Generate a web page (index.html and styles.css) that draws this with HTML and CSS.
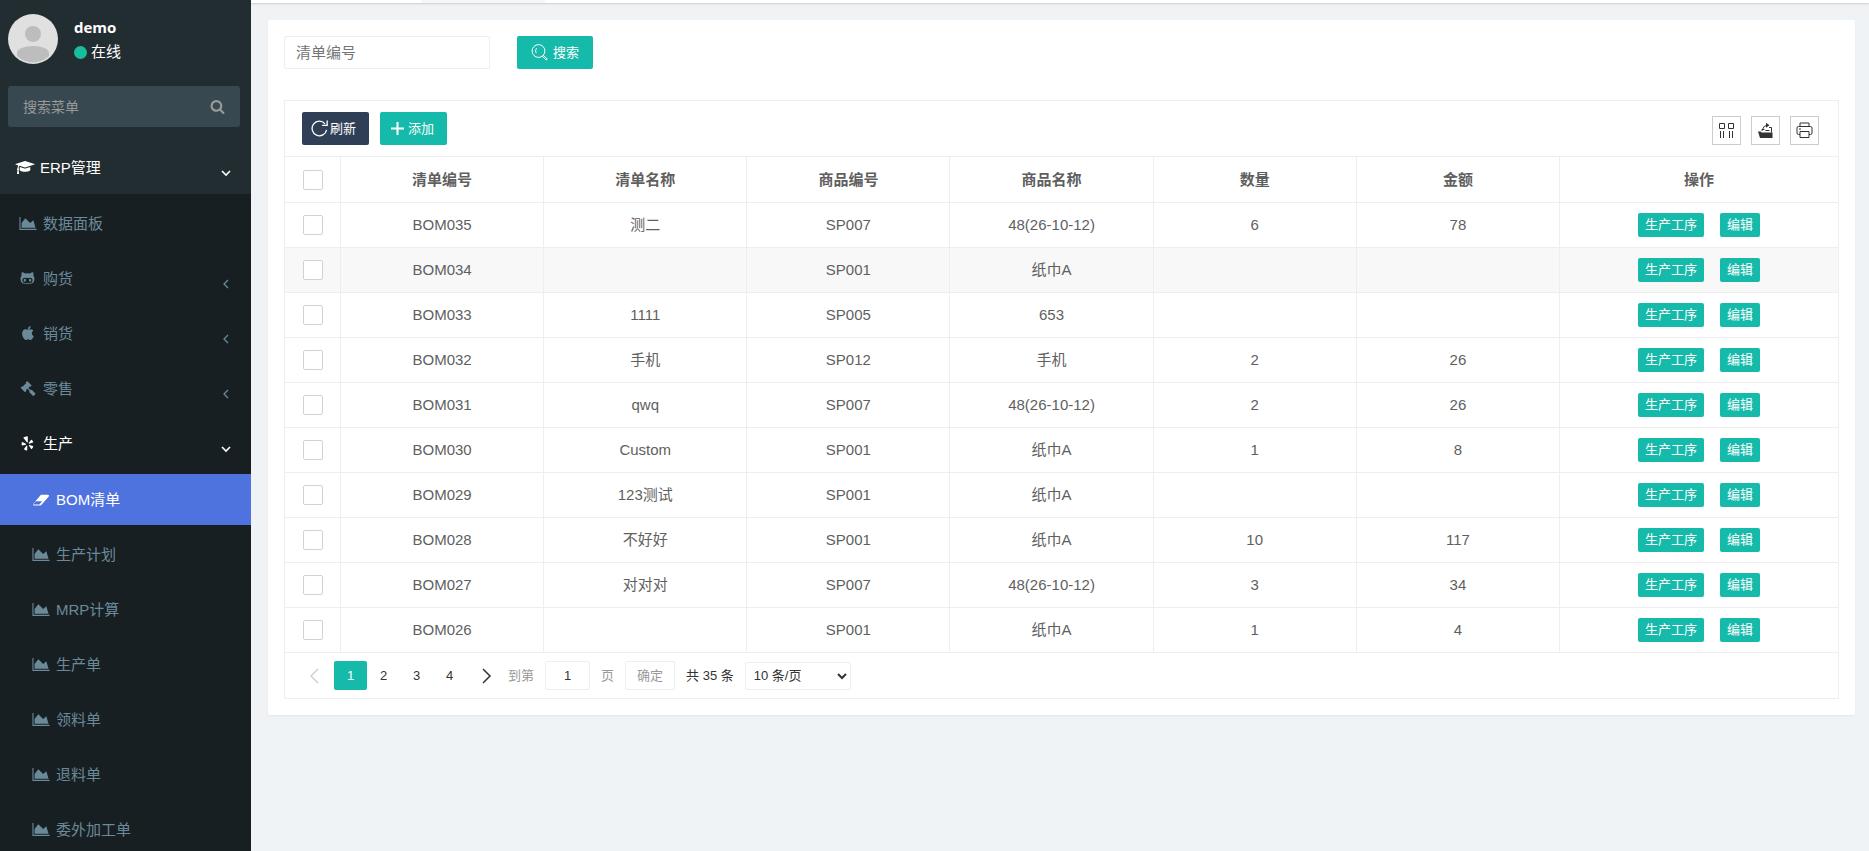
FILE: index.html
```html
<!DOCTYPE html>
<html lang="zh-CN">
<head>
    <meta charset="UTF-8">
    <meta name="viewport" content="width=device-width, initial-scale=1.0">
    <title>BOM清单</title>

    <link rel="stylesheet" href="styles.css">
</head>
<body>
    <svg class="sprite" aria-hidden="true">
        <symbol id="i-chart" viewBox="0 0 2048 1792"><path d="M2048 1536v128h-2048v-1536h128v1408h1920zM1664 512l256 896h-1664v-576l448-576 576 576z"/></symbol>
        <symbol id="i-cap" viewBox="0 0 2304 1792"><path d="M1774 836l18 316q4 69-82 128t-235 93.500-323 34.500-323-34.500-235-93.500-82-128l18-316 574 181q22 7 48 7t48-7zm530-324q0 23-22 31l-1120 352q-4 1-10 1t-10-1l-652-206q-43 34-71 111.500t-34 178.500q63 36 63 109 0 69-58 107l58 433q2 14-8 25-9 11-24 11h-192q-15 0-24-11-10-11-8-25l58-433q-58-38-58-107 0-73 65-111 11-207 98-330l-333-104q-22-8-22-31t22-31l1120-352q4-1 10-1t10 1l1120 352q22 8 22 31z"/></symbol>
        <symbol id="i-cat" viewBox="0 0 1792 1792"><path d="M640 1104q0 40-12.500 82t-43 76-72.500 34-72.500-34-43-76-12.500-82 12.500-82 43-76 72.500-34 72.500 34 43 76 12.500 82zm640 0q0 40-12.500 82t-43 76-72.500 34-72.500-34-43-76-12.500-82 12.500-82 43-76 72.500-34 72.500 34 43 76 12.500 82zm160 0q0-120-69-204t-187-84q-41 0-195 21-71 11-157 11t-157-11q-152-21-195-21-118 0-187 84t-69 204q0 88 32 153.500t81 103 122 60 140 29.500 149 7h168q82 0 149-7t140-29.500 122-60 81-103 32-153.500zm224-176q0 207-61 331-38 77-105.500 133t-141 86-170 47.500-171.500 22-167 4.500q-78 0-142-3t-147.500-12.500-152.500-30-137-51.500-121-81-86-115q-62-123-62-331 0-237 136-396-27-82-27-170 0-116 51-218 108 0 190 39.500t189 123.500q147-35 309-35 148 0 280 32 105-82 187-121t189-39q51 102 51 218 0 87-27 168 136 160 136 398z"/></symbol>
        <symbol id="i-apple" viewBox="0 0 1792 1792"><path d="M1585 1215q-39 125-123 250-129 196-257 196-49 0-140-32-86-32-151-32-61 0-142 33-81 34-132 34-152 0-301-259-147-261-147-503 0-228 113-374 113-144 284-144 72 0 177 30 104 30 138 30 45 0 143-34 102-34 173-34 119 0 213 65 52 36 104 100-79 67-114 118-65 94-65 207 0 124 69 223t158 126zm-376-1173q0 61-29 136-30 75-93 138-54 54-108 72-37 11-104 17 3-149 78-257 74-107 250-148 1 3 2.500 11t2.500 11q0 4 .5 10t.5 10z"/></symbol>
        <symbol id="i-gavel" viewBox="0 0 1792 1792"><path d="M1771 1536q0 53-37 90l-107 108q-39 37-91 37-53 0-90-37l-363-364q-38-36-38-90 0-53 43-96l-256-256-126 126q-14 14-34 14t-34-14q2 2 12.500 12t12.500 13 10 11.500 10 13.500 6 13.500 5.500 16.500 1.500 18q0 38-28 68-3 3-16.500 18t-19 20.500-18.500 16.500-22 15.500-22 9-26 4.500q-40 0-68-28l-408-408q-28-28-28-68 0-13 4.500-26t9-22 15.500-22 16.500-18.500 20.500-19 18-16.500q30-28 68-28 10 0 18 1.500t16.500 5.500 13.500 6 13.500 10 11.500 10 13 12.500 12 12.500q-14-14-14-34t14-34l348-348q14-14 34-14t34 14q-2-2-12.500-12t-12.500-13-10-11.500-10-13.500-6-13.500-5.500-16.500-1.500-18q0-38 28-68 3-3 16.500-18t19-20.500 18.500-16.500 22-15.500 22-9 26-4.500q40 0 68 28l408 408q28 28 28 68 0 13-4.500 26t-9 22-15.500 22-16.500 18.500-20.500 19-18 16.500q-30 28-68 28-10 0-18-1.500t-16.500-5.500-13.500-6-13.500-10-11.500-10-13-12.500-12-12.500q14 14 14 34t-14 34l-126 126 256 256q43-43 96-43 52 0 91 37l363 363q37 39 37 91z"/></symbol>
        <symbol id="i-yelp" viewBox="0 0 16 16"><path d="M3.500 1.200L7 .2q.8-.1.8.7v5.500q-.2 1-1 .3L3.200 2.200q-.3-.7.3-1zM2 6.500l3.700 1.700q.7.600-.1 1L2 10.200q-.8 0-.8-.8l.1-2.300q.1-.7.700-.6zM6.300 10.400q.9-.5.9.4v3.900q-.1.900-.9.700l-2-.8q-.8-.4-.4-1zM8.900 10.200q-.2-.9.700-.7l3.500 1.200q.8.400.4 1.100l-1.200 1.800q-.6.500-1.100 0zM9.300 8.200q-.9-.1-.4-.9l2.200-3.100q.6-.6 1.100 0l1.300 1.700q.4.800-.4 1.100z"/></symbol>
        <symbol id="i-eraser" viewBox="0 0 2048 1792"><path d="M832 1480l336-384h-768l-336 384h768zm1141-1077q15 34 9.500 71.500t-30.500 65.500l-896 1024q-38 44-96 44h-768q-38 0-69.500-20.500t-47.500-54.500q-15-34-9.500-71.500t30.500-65.500l896-1024q38-44 96-44h768q38 0 69.500 20.500t47.500 54.500z" fill-rule="evenodd"/></symbol>
        <symbol id="i-find" viewBox="0 0 1792 1792"><path d="M1216 832q0-185-131.500-316.500t-316.500-131.500-316.500 131.500-131.500 316.500 131.500 316.500 316.500 131.500 316.500-131.500 131.500-316.500zm512 832q0 52-38 90t-90 38q-54 0-90-38l-343-342q-179 124-399 124-143 0-273.500-55.500t-225-150-150-225-55.500-273.500 55.500-273.500 150-225 225-150 273.500-55.500 273.500 55.500 225 150 150 225 55.500 273.500q0 220-124 399l343 343q37 37 37 90z"/></symbol>
        <symbol id="i-left" viewBox="0 0 10 10"><path d="M7 1L3 5l4 4" fill="none" stroke="currentColor" stroke-width="1.300"/></symbol>
        <symbol id="i-down" viewBox="0 0 10 10"><path d="M1 3l4 4 4-4" fill="none" stroke="currentColor" stroke-width="1.600"/></symbol>
    </svg>

    <div class="wrapper">
        <aside class="sidebar">
            <div class="user">
                <svg class="avatar" viewBox="0 0 50 50">
                    <circle cx="25" cy="25" r="25" fill="#e0e0e0"/>
                    <circle cx="25" cy="20" r="8" fill="#bdbdbd"/>
                    <path d="M9 42v-3c0-4 7-7 16-7s16 3 16 7v3a23 23 0 0 1-32 0z" fill="#bdbdbd"/>
                </svg>
                <div class="user-info">
                    <div class="user-name">demo</div>
                    <div class="user-status"><span class="dot"></span>在线</div>
                </div>
            </div>
            <form class="menu-search">
                <input type="text" placeholder="搜索菜单" aria-label="搜索菜单">
                <button type="button" aria-label="搜索"><svg><use href="#i-find"/></svg></button>
            </form>
            <nav>
                <a class="menu-root" href="#"><svg class="menu-icon"><use href="#i-cap"/></svg>ERP管理<svg class="arrow"><use href="#i-down"/></svg></a>
                <ul class="menu">
                    <li><a href="#"><svg class="menu-icon"><use href="#i-chart"/></svg>数据面板</a></li>
                    <li><a href="#"><svg class="menu-icon"><use href="#i-cat"/></svg>购货<svg class="arrow"><use href="#i-left"/></svg></a></li>
                    <li><a href="#"><svg class="menu-icon"><use href="#i-apple"/></svg>销货<svg class="arrow"><use href="#i-left"/></svg></a></li>
                    <li><a href="#"><svg class="menu-icon"><use href="#i-gavel"/></svg>零售<svg class="arrow"><use href="#i-left"/></svg></a></li>
                    <li>
                        <a class="open" href="#"><svg class="menu-icon"><use href="#i-yelp"/></svg>生产<svg class="arrow"><use href="#i-down"/></svg></a>
                        <ul class="submenu">
                            <li><a class="active" href="#"><svg class="menu-icon"><use href="#i-eraser"/></svg>BOM清单</a></li>
                            <li><a href="#"><svg class="menu-icon"><use href="#i-chart"/></svg>生产计划</a></li>
                            <li><a href="#"><svg class="menu-icon"><use href="#i-chart"/></svg>MRP计算</a></li>
                            <li><a href="#"><svg class="menu-icon"><use href="#i-chart"/></svg>生产单</a></li>
                            <li><a href="#"><svg class="menu-icon"><use href="#i-chart"/></svg>领料单</a></li>
                            <li><a href="#"><svg class="menu-icon"><use href="#i-chart"/></svg>退料单</a></li>
                            <li><a href="#"><svg class="menu-icon"><use href="#i-chart"/></svg>委外加工单</a></li>
                        </ul>
                    </li>
                </ul>
            </nav>
        </aside>

        <main class="content">
            <div class="tabs"><div class="tab"></div></div>
            <section class="card">
                <form class="search-form">
                    <input class="search-input" type="text" placeholder="清单编号" aria-label="清单编号">
                    <button class="btn btn-search" type="button">
                        <svg viewBox="0 0 17 17" fill="none" stroke="currentColor"><circle cx="7.500" cy="7" r="6.400"/><path d="M12.200 11.300l4 3.600-1 1.200-4-3.900M5.500 4.200q-1.800 2.300-.3 5"/></svg>搜索
                    </button>
                </form>

                <div class="table-box">
                    <div class="toolbar">
                        <button class="btn btn-tool btn-dark" type="button">
                            <svg viewBox="0 0 17 17" fill="none" stroke="currentColor" stroke-width="1.300"><path d="M15.600 9.800A7.300 7.300 0 1 1 14 3.800M16.200.5v4.900h-5"/></svg>刷新
                        </button>
                        <button class="btn btn-tool" type="button">
                            <svg viewBox="0 0 17 17" fill="none" stroke="currentColor" stroke-width="2"><path d="M2 8.500h13M8.500 2v13"/></svg>添加
                        </button>
                        <div class="table-tools">
                            <button type="button" aria-label="筛选列"><svg viewBox="0 0 17 17" fill="none" stroke="currentColor"><path d="M1.500 1.500h5v5h-5zM10.500 1.500h5v5h-5zM2.500 9v7M5.500 9v7M11.500 9v7M14.500 9v7"/></svg></button>
                            <button type="button" aria-label="导出"><svg viewBox="0 0 17 17"><path d="M1 9.500h2.500l1 1h11V16H3z"/><path d="M5 9V7.500h2.500M12 5.500h2.500v5M5.500 7.500q1-4 4.500-4.200M8.500 8.500h4" fill="none" stroke="currentColor"/><path d="M9 .8l3.500 2.500L9 5.800z"/></svg></button>
                            <button type="button" aria-label="打印"><svg viewBox="0 0 17 17" fill="none" stroke="currentColor"><path d="M4 4.500v-3.500h9v3.500M4 12.500H2.500q-1.500 0-1.500-1.500V6q0-1.500 1.500-1.500h12q1.500 0 1.500 1.500v5q0 1.500-1.500 1.500H13M4 9.500h9v6H4zM3 7h2"/></svg></button>
                        </div>
                    </div>

                    <table class="data-table">
                        <colgroup>
                            <col class="col-check">
                            <col span="6">
                            <col class="col-action">
                        </colgroup>
                        <thead>
                            <tr>
                                <th><input type="checkbox" aria-label="全选"></th>
                                <th>清单编号</th>
                                <th>清单名称</th>
                                <th>商品编号</th>
                                <th>商品名称</th>
                                <th>数量</th>
                                <th>金额</th>
                                <th>操作</th>
                            </tr>
                        </thead>
                        <tbody>
                            <tr>
                                <td><input type="checkbox" aria-label="BOM035"></td>
                                <td>BOM035</td><td>测二</td><td>SP007</td><td>48(26-10-12)</td><td>6</td><td>78</td>
                                <td><div class="actions"><button class="btn-xs" type="button">生产工序</button><button class="btn-xs" type="button">编辑</button></div></td>
                            </tr>
                            <tr class="hover">
                                <td><input type="checkbox" aria-label="BOM034"></td>
                                <td>BOM034</td><td></td><td>SP001</td><td>纸巾A</td><td></td><td></td>
                                <td><div class="actions"><button class="btn-xs" type="button">生产工序</button><button class="btn-xs" type="button">编辑</button></div></td>
                            </tr>
                            <tr>
                                <td><input type="checkbox" aria-label="BOM033"></td>
                                <td>BOM033</td><td>1111</td><td>SP005</td><td>653</td><td></td><td></td>
                                <td><div class="actions"><button class="btn-xs" type="button">生产工序</button><button class="btn-xs" type="button">编辑</button></div></td>
                            </tr>
                            <tr>
                                <td><input type="checkbox" aria-label="BOM032"></td>
                                <td>BOM032</td><td>手机</td><td>SP012</td><td>手机</td><td>2</td><td>26</td>
                                <td><div class="actions"><button class="btn-xs" type="button">生产工序</button><button class="btn-xs" type="button">编辑</button></div></td>
                            </tr>
                            <tr>
                                <td><input type="checkbox" aria-label="BOM031"></td>
                                <td>BOM031</td><td>qwq</td><td>SP007</td><td>48(26-10-12)</td><td>2</td><td>26</td>
                                <td><div class="actions"><button class="btn-xs" type="button">生产工序</button><button class="btn-xs" type="button">编辑</button></div></td>
                            </tr>
                            <tr>
                                <td><input type="checkbox" aria-label="BOM030"></td>
                                <td>BOM030</td><td>Custom</td><td>SP001</td><td>纸巾A</td><td>1</td><td>8</td>
                                <td><div class="actions"><button class="btn-xs" type="button">生产工序</button><button class="btn-xs" type="button">编辑</button></div></td>
                            </tr>
                            <tr>
                                <td><input type="checkbox" aria-label="BOM029"></td>
                                <td>BOM029</td><td>123测试</td><td>SP001</td><td>纸巾A</td><td></td><td></td>
                                <td><div class="actions"><button class="btn-xs" type="button">生产工序</button><button class="btn-xs" type="button">编辑</button></div></td>
                            </tr>
                            <tr>
                                <td><input type="checkbox" aria-label="BOM028"></td>
                                <td>BOM028</td><td>不好好</td><td>SP001</td><td>纸巾A</td><td>10</td><td>117</td>
                                <td><div class="actions"><button class="btn-xs" type="button">生产工序</button><button class="btn-xs" type="button">编辑</button></div></td>
                            </tr>
                            <tr>
                                <td><input type="checkbox" aria-label="BOM027"></td>
                                <td>BOM027</td><td>对对对</td><td>SP007</td><td>48(26-10-12)</td><td>3</td><td>34</td>
                                <td><div class="actions"><button class="btn-xs" type="button">生产工序</button><button class="btn-xs" type="button">编辑</button></div></td>
                            </tr>
                            <tr>
                                <td><input type="checkbox" aria-label="BOM026"></td>
                                <td>BOM026</td><td></td><td>SP001</td><td>纸巾A</td><td>1</td><td>4</td>
                                <td><div class="actions"><button class="btn-xs" type="button">生产工序</button><button class="btn-xs" type="button">编辑</button></div></td>
                            </tr>
                        </tbody>
                    </table>

                    <div class="pager">
                        <div class="pages">
                            <button class="page-arrow prev" type="button" aria-label="上一页"><svg viewBox="0 0 16 16"><path d="M12 1L5 8l7 7"/></svg></button>
                            <a class="current" href="#">1</a>
                            <a href="#">2</a>
                            <a href="#">3</a>
                            <a href="#">4</a>
                            <button class="page-arrow next" type="button" aria-label="下一页"><svg viewBox="0 0 16 16"><path d="M4 1l7 7-7 7"/></svg></button>
                        </div>
                        <label class="page-skip">到第<input type="text" value="1">页</label>
                        <button class="page-ok" type="button">确定</button>
                        <span class="page-count">共 35 条</span>
                        <select class="page-limit" aria-label="每页条数">
                            <option>10 条/页</option>
                            <option>20 条/页</option>
                            <option>30 条/页</option>
                        </select>
                    </div>
                </div>
            </section>
        </main>
    </div>
</body>
</html>
```

FILE: styles.css
```css
* {
    box-sizing: border-box;
}

body {
    margin: 0;
    background: #eff3f6;
    color: #5f5f5f;
    fill: currentColor;
    font-family: "Liberation Sans", "Noto Sans CJK SC", sans-serif;
    font-size: 15px;
    line-height: 20px;
}

a {
    color: inherit;
    text-decoration: none;
}

ul {
    margin: 0;
    padding: 0;
    list-style: none;
}

button,
input,
select {
    margin: 0;
    font-family: inherit;
    line-height: 20px;
}

button {
    cursor: pointer;
}

.sprite {
    display: none;
}

.wrapper {
    display: flex;
    height: 100vh;
    overflow: hidden;
}

/* sidebar */
.sidebar {
    flex: none;
    width: 251px;
    overflow: hidden;
    background: #222d32;
    color: #fff;
}

.user {
    display: flex;
    gap: 16px;
    padding: 14px 8px 22px;
}

.avatar {
    width: 50px;
    height: 50px;
}

.user-name {
    height: 28px;
    line-height: 26px;
    font-family: "Open Sans", sans-serif;
    font-weight: bold;
}

.user-status {
    display: flex;
    align-items: center;
    gap: 4px;
}

.dot {
    width: 13px;
    height: 13px;
    border-radius: 50%;
    background: #1abc9c;
}

.menu-search {
    display: flex;
    height: 41px;
    margin: 0 11px 0 8px;
    border-radius: 3px;
    background: #374850;
}

.menu-search input {
    flex: 1;
    min-width: 0;
    padding: 0 15px;
    border: 0;
    background: none;
    color: #fff;
    font-size: 14px;
}

.menu-search input::placeholder {
    color: #999;
}

.menu-search button {
    width: 45px;
    padding: 0;
    border: 0;
    background: none;
    color: #999;
}

.menu-search svg {
    display: block;
    width: 15px;
    height: 15px;
    margin: 0 auto;
}

.menu-root,
.menu a {
    display: flex;
    align-items: center;
    height: 51px;
}

.menu-root {
    height: 67px;
    padding: 14px 20px 0 15px;
}

.menu-icon {
    width: 18px;
    height: 15px;
    margin-right: 6px;
}

.menu-root .menu-icon {
    width: 20px;
    margin-right: 5px;
}

.arrow {
    width: 10px;
    height: 10px;
    margin-top: 10px;
    margin-left: auto;
}

.menu {
    height: 100vh;
    padding-top: 4px;
    background: #181f23;
    color: #6b8a99;
}

.menu a {
    margin-bottom: 4px;
    padding: 0 20px 0 19px;
}

.menu .open {
    color: #fff;
}

.submenu {
    padding-top: 1px;
}

.submenu a {
    padding-left: 32px;
}

.submenu .active {
    background: #4e73df;
    color: #fff;
}

/* content */
.content {
    flex: 1;
    min-width: 0;
    overflow: hidden;
}

.tabs {
    height: 3px;
    padding-left: 170px;
    background: #fff;
    box-shadow: 0 1px 2px rgba(0, 0, 0, .15);
}

.tab {
    width: 124px;
    height: 3px;
    background: #f6f6f6;
}

.card {
    margin: 17px 14px 0 17px;
    padding: 16px;
    border-radius: 2px;
    background: #fff;
    box-shadow: 0 1px 2px rgba(0, 0, 0, .05);
}

.search-form {
    display: flex;
    gap: 27px;
    margin-bottom: 31px;
}

.search-input {
    width: 206px;
    height: 33px;
    padding: 0 11px;
    border: 1px solid #eee;
    border-radius: 2px;
    font-size: 15px;
}

.search-input::placeholder {
    color: #757575;
}

.btn {
    display: flex;
    align-items: center;
    height: 33px;
    border: 0;
    border-radius: 2px;
    background: #16baaa;
    color: #fff;
    font-size: 13px;
}

.btn svg {
    width: 17px;
    height: 17px;
}

.btn-search {
    gap: 5px;
    padding: 0 14px;
}

.btn-tool {
    gap: 2px;
    padding: 0 13px 0 9px;
}

.btn-dark {
    background: #2f4056;
}

.table-box {
    border: 1px solid #eee;
}

.toolbar {
    display: flex;
    gap: 11px;
    padding: 11px 19px 11px 17px;
}

.table-tools {
    display: flex;
    gap: 10px;
    margin-left: auto;
    padding-top: 4px;
}

.table-tools button {
    display: flex;
    align-items: center;
    justify-content: center;
    width: 29px;
    height: 29px;
    padding: 0;
    border: 1px solid #ccc;
    background: none;
    color: #333;
}

.table-tools svg {
    width: 17px;
    height: 17px;
}

.data-table {
    width: 100%;
    table-layout: fixed;
    border-collapse: separate;
    border-spacing: 0;
}

.col-check {
    width: 56px;
}

.col-action {
    width: 278px;
}

.data-table th,
.data-table td {
    height: 45px;
    padding: 0;
    border-top: 1px solid #eee;
    border-right: 1px solid #eee;
    text-align: center;
}

.data-table th {
    height: 46px;
}

.data-table th:last-child,
.data-table td:last-child {
    border-right: 0;
}

.data-table .hover {
    background: #f8f8f8;
}

.data-table input {
    display: block;
    width: 20px;
    height: 20px;
    margin: 0 auto;
    border: 1px solid #d2d2d2;
    border-radius: 2px;
    background: #fff;
    appearance: none;
}

.actions {
    display: flex;
    justify-content: center;
    gap: 16px;
}

.btn-xs {
    height: 24px;
    padding: 0 7px;
    border: 0;
    border-radius: 2px;
    background: #16baaa;
    color: #fff;
    font-size: 13px;
}

/* pagination */
.pager {
    display: flex;
    align-items: center;
    gap: 11px;
    padding: 8px 18px;
    border-top: 1px solid #eee;
    color: #333;
    font-size: 13px;
}

.pages {
    display: flex;
}

.pages a {
    width: 33px;
    height: 29px;
    line-height: 29px;
    text-align: center;
}

.pages .current {
    border-radius: 2px;
    background: #16baaa;
    color: #fff;
}

.page-arrow {
    display: flex;
    align-items: center;
    justify-content: center;
    width: 31px;
    padding: 0;
    border: 0;
    background: none;
    color: #333;
}

.page-arrow svg {
    width: 16px;
    height: 16px;
    fill: none;
    stroke: currentColor;
    stroke-width: 1.5;
}

.prev {
    padding-right: 10px;
    color: #d2d2d2;
}

.next {
    padding-left: 10px;
}

.page-skip {
    display: flex;
    align-items: center;
    gap: 11px;
    color: #999;
}

.page-skip input {
    width: 45px;
    height: 29px;
    padding: 0;
    border: 1px solid #eee;
    border-radius: 2px;
    color: #333;
    font-size: 13px;
    text-align: center;
}

.page-ok {
    height: 29px;
    padding: 0 11px;
    border: 1px solid #eee;
    border-radius: 2px;
    background: #fff;
    color: #999;
    font-size: 13px;
}

.page-limit {
    width: 106px;
    height: 28px;
    padding: 0 4px;
    border: 1px solid #eee;
    border-radius: 2px;
    background: #fff;
    color: #333;
    font-size: 13px;
}
```
